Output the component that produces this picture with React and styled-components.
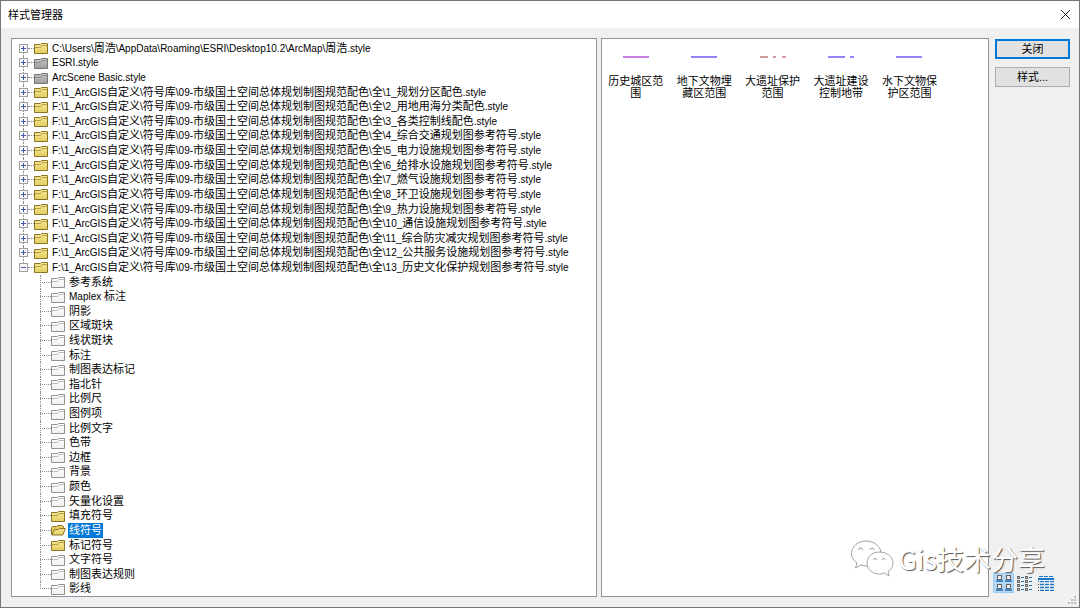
import React from 'react';
import styled, { createGlobalStyle, css } from 'styled-components';

const GlobalStyle = createGlobalStyle`
  *, *::before, *::after { box-sizing: border-box; }
  html, body, #root { height: 100%; margin: 0; }
  body, button {
    font-family: "Liberation Sans", "Noto Sans CJK SC", sans-serif;
    font-size: 11px;
    line-height: 12px;
    color: #000;
  }
`;

const Window = styled.div`
  height: 100%;
  display: flex;
  flex-direction: column;
  background: #f0f0f0;
  border: 1px solid #77777a;
`;

const TitleBar = styled.header`
  flex: none;
  height: 27px;
  padding: 0 8px 0 7px;
  display: flex;
  align-items: center;
  justify-content: space-between;
  background: #fff;
`;

const Title = styled.h1`
  margin: 0;
  font-size: 11px;
  font-weight: 400;
`;

const CloseButton = styled.button`
  display: flex;
  padding: 0;
  border: 0;
  background: none;
`;

const Body = styled.main`
  flex: 1;
  min-height: 0;
  display: grid;
  grid-template-columns: minmax(0, 195fr) minmax(0, 130fr) 75px;
  column-gap: 4px;
  padding: 10px 9px 10px 10px;
`;

const Panel = styled.section`
  background: #fff;
  border: 1px solid #8f959f;
  min-width: 0;
  min-height: 0;
`;

const TreePanel = styled(Panel)`
  padding: 2px 0 0 7px;
`;

const PreviewPanel = styled(Panel)`
  margin-right: 2px;
  padding: 8px 0;
`;

const Tree = styled.ul`
  height: 100%;
  margin: 0;
  padding: 0;
  list-style: none;
  display: flex;
  flex-direction: column;
`;

const Row = styled.li`
  flex: 1;
  min-height: 0;
  display: flex;
  align-items: center;
  padding-left: ${(p) => (p.$child ? 21 : 0)}px;
  position: relative;

  &::before {
    content: '';
    position: absolute;
    left: ${(p) => (p.$child ? 21 : 4)}px;
    top: ${(p) => (p.$first ? '50%' : 0)};
    bottom: ${(p) => (p.$last ? '50%' : 0)};
    border-left: 1px dotted #8c8c8c;
  }
`;

const Expander = styled.button`
  position: relative;
  display: flex;
  width: 9px;
  height: 9px;
  padding: 0;
  border: 0;
  background: none;
`;

const Connector = styled.span`
  width: ${(p) => (p.$long ? 11 : 6)}px;
  border-top: 1px dotted #8c8c8c;
`;

const Label = styled.span`
  margin-left: 2px;
  padding: 0 1px;
  line-height: 15px;
  white-space: pre;
  ${(p) => p.$selected && css`
    background: #0078d7;
    color: #fff;
  `}
`;

const Latin = styled.span`
  font-size: 10px;
`;

const Symbols = styled.ul`
  width: 342px;
  max-width: 100%;
  margin: 0;
  padding: 0;
  list-style: none;
  display: grid;
  grid-template-columns: repeat(5, 1fr);
`;

const Symbol = styled.li`
  display: flex;
  flex-direction: column;
  align-items: center;
  text-align: center;
`;

const SymbolName = styled.span`
  width: 56px;
  margin-top: 8px;
`;

const Side = styled.aside`
  padding-top: 1px;
  display: flex;
  flex-direction: column;
  gap: 8px;
`;

const Button = styled.button`
  height: 20px;
  padding: 0;
  background: #e1e1e1;
  border: ${(p) => (p.$primary ? '2px solid #0078d7' : '1px solid #adadad')};
`;

const Views = styled.div`
  display: flex;
  margin: auto 0 4px -2px;
`;

const ViewButton = styled.button`
  display: flex;
  align-items: center;
  justify-content: center;
  width: 21px;
  height: 20px;
  padding: 0;
  border: ${(p) => (p.$active ? '1px solid #99ccf5' : '0')};
  background: ${(p) => (p.$active ? '#b5d7f3' : 'none')};
`;

const Watermark = styled.div`
  position: absolute;
  right: 35px;
  bottom: 30px;
  display: flex;
  align-items: center;
  gap: 4px;
  pointer-events: none;
  color: #fff;
  font-family: "Noto Sans CJK SC", sans-serif;
  font-size: 27px;
  line-height: 36px;
  text-shadow: 1px 1px 1px #555;
`;

const Grip = styled.svg`
  position: absolute;
  right: 4px;
  bottom: 4px;
`;

const FOLDERS = {
  gold: ['#8a7526', '#f7e995', '#e3cc62'],
  grey: ['#757575', '#c4c5c7', '#9c9da0'],
  empty: ['#929292', '#ffffff', '#f0f0f0'],
};

function Folder({ kind }) {
  const open = kind === 'open';
  const [line, light, dark] = FOLDERS[open ? 'gold' : kind];
  const id = `folder-${kind}`;
  return (
    <svg width="15" height="12" viewBox="0 0 15 12" aria-hidden="true">
      <defs>
        <linearGradient id={id} x1="0" y1="0" x2="0" y2="1">
          <stop offset="0" stopColor={light} />
          <stop offset="1" stopColor={dark} />
        </linearGradient>
      </defs>
      {open ? (
        <g stroke={line} strokeLinejoin="round">
          <path d="M.5 10.500V3.500L1.500 2.500H5.500L7 1.500H11.500L12.500 2.500V5" fill={dark} />
          <path d="M.8 11 3.500 5.500H7.300L8.500 4.500H14.400L11.800 11Z" fill={`url(#${id})`} />
        </g>
      ) : (
        <g stroke={line}>
          <path d="M.5 11.500V2.500H6.500L7.500 1.500H13.500V11.500Z" fill={`url(#${id})`} />
          <path d="M1 5.500H6.500L8 3.500H13" fill="none" opacity=".6" />
        </g>
      )}
    </svg>
  );
}

function ExpandMark({ open }) {
  return (
    <svg width="9" height="9" viewBox="0 0 9 9" aria-hidden="true">
      <rect x=".5" y=".5" width="8" height="8" fill="#f8f8f8" stroke="#a0a0a0" />
      <path d={open ? 'M2 4.5H7' : 'M2 4.5H7M4.5 2V7'} stroke="#3c5aa8" />
    </svg>
  );
}

function MixedText({ children }) {
  return children
    .split(/([\x20-\x7e]+)/)
    .filter(Boolean)
    .map((part, i) => (/^[\x20-\x7e]/.test(part) ? <Latin key={i}>{part}</Latin> : part));
}

const BASE = 'F:\\1_ArcGIS自定义\\符号库\\09-市级国土空间总体规划制图规范配色\\全\\';

const STYLES = [
  ['C:\\Users\\周浩\\AppData\\Roaming\\ESRI\\Desktop10.2\\ArcMap\\周浩.style', 'gold'],
  ['ESRI.style', 'grey'],
  ['ArcScene Basic.style', 'grey'],
  ...[
    '1_规划分区配色',
    '2_用地用海分类配色',
    '3_各类控制线配色',
    '4_综合交通规划图参考符号',
    '5_电力设施规划图参考符号',
    '6_给排水设施规划图参考符号',
    '7_燃气设施规划图参考符号',
    '8_环卫设施规划图参考符号',
    '9_热力设施规划图参考符号',
    '10_通信设施规划图参考符号',
    '11_综合防灾减灾规划图参考符号',
    '12_公共服务设施规划图参考符号',
    '13_历史文化保护规划图参考符号',
  ].map((name) => [`${BASE}${name}.style`, 'gold']),
];

const CATEGORIES = [
  '参考系统', 'Maplex 标注', '阴影', '区域斑块', '线状斑块', '标注', '制图表达标记', '指北针',
  '比例尺', '图例项', '比例文字', '色带', '边框', '背景', '颜色', '矢量化设置',
  '填充符号', '线符号', '标记符号', '文字符号', '制图表达规则', '影线',
];
const CATEGORY_FOLDERS = { 填充符号: 'gold', 线符号: 'open', 标记符号: 'gold' };

const SYMBOLS = [
  ['历史城区范围', '#c77fe0', [[0, 26]]],
  ['地下文物埋藏区范围', '#9a83fa', [[0, 26]]],
  ['大遗址保护范围', '#cf9e9b', [[0, 8], [13, 16], [22, 26]]],
  ['大遗址建设控制地带', '#9a83fa', [[0, 17], [22, 26]]],
  ['水下文物保护区范围', '#9a83fa', [[0, 26]]],
];

function LargeIcons() {
  return (
    <svg width="16" height="16" viewBox="0 0 16 16" aria-hidden="true">
      {[[1, 0], [10, 0], [1, 9], [10, 9]].map(([x, y]) => (
        <g key={`${x}-${y}`}>
          <rect x={x + 0.5} y={y + 0.5} width="4" height="4" fill="#eee" stroke="#666" />
          <path d={`M${x - 1} ${y + 6}H${x + 6}`} stroke="#3f86c8" strokeWidth="2" />
        </g>
      ))}
    </svg>
  );
}

function ListIcon() {
  return (
    <svg width="16" height="16" viewBox="0 0 16 16" aria-hidden="true">
      {[0, 8].map((x) => [1, 5, 9, 13].map((y) => (
        <g key={`${x}-${y}`}>
          <rect x={x + 0.5} y={y + 0.5} width="2" height="2" fill="#ddd" stroke="#666" />
          <path d={`M${x + 4} ${y + 1.5}H${x + 7}`} stroke="#1976c8" />
        </g>
      )))}
    </svg>
  );
}

function DetailsIcon() {
  return (
    <svg width="16" height="16" viewBox="0 0 16 16" aria-hidden="true">
      <path d="M1 1.500H16" stroke="#1976c8" strokeDasharray="4 1" />
      <path d="M0 4H16" stroke="#1976c8" strokeWidth="2" />
      {[6.5, 9.5, 12.5, 15.5].map((y) => (
        <g key={y}>
          <path d={`M0 ${y}H1`} stroke="#444" />
          <path d={`M2 ${y}H16`} stroke="#1976c8" strokeDasharray="4 1" />
        </g>
      ))}
      <path d="M2 8H16M2 11H16M2 14H16" stroke="#8dbbe4" strokeDasharray="4 1" />
    </svg>
  );
}

function ChatLogo() {
  return (
    <svg width="44" height="38" viewBox="0 0 44 38" aria-hidden="true">
      <g fill="#fff" stroke="#8a8a8a" strokeWidth=".8" strokeLinejoin="round">
        <path d="M16 1C8 1 1.500 6.500 1.500 13.500C1.500 17.500 3.500 20.500 7 23L5.500 28L11 25C13 25.700 15 26 17 26C25 26 31 20.500 31 13.500C31 6.500 24 1 16 1Z" />
        <path d="M29.500 12C22 12 17 17 17 23C17 29.500 22.500 34 29.500 34C31.500 34 33 33.700 34.500 33L39 36L38 31.500C41 29.500 43 26.500 43 23C43 17 37 12 29.500 12Z" />
        <path d="M8.500 10a2 2 0 0 1 4 0M20 10a2 2 0 0 1 4 0M23.500 20a1.600 1.600 0 0 1 3.200 0M32 20a1.600 1.600 0 0 1 3.200 0" />
      </g>
    </svg>
  );
}

export default function App() {
  return (
    <>
      <GlobalStyle />
      <Window>
        <TitleBar>
          <Title>样式管理器</Title>
          <CloseButton aria-label="关闭窗口">
            <svg width="11" height="11" viewBox="0 0 11 11" aria-hidden="true">
              <path d="M1 1 10 10M10 1 1 10" stroke="#222" />
            </svg>
          </CloseButton>
        </TitleBar>
        <Body>
          <TreePanel>
            <Tree>
              {STYLES.map(([name, kind], i) => (
                <Row key={name} $first={i === 0} $last={i === STYLES.length - 1}>
                  <Expander aria-label={name} aria-expanded={i === STYLES.length - 1}>
                    <ExpandMark open={i === STYLES.length - 1} />
                  </Expander>
                  <Connector />
                  <Folder kind={kind} />
                  <Label><MixedText>{name}</MixedText></Label>
                </Row>
              ))}
              {CATEGORIES.map((name, i) => (
                <Row key={name} $child $last={i === CATEGORIES.length - 1}>
                  <Connector $long />
                  <Folder kind={CATEGORY_FOLDERS[name] || 'empty'} />
                  <Label $selected={name === '线符号'}><MixedText>{name}</MixedText></Label>
                </Row>
              ))}
            </Tree>
          </TreePanel>
          <PreviewPanel>
            <Symbols>
              {SYMBOLS.map(([name, color, dashes]) => (
                <Symbol key={name}>
                  <svg width="26" height="20" viewBox="0 0 26 20" aria-hidden="true">
                    {dashes.map(([from, to]) => (
                      <path key={from} d={`M${from} 10H${to}`} stroke={color} strokeWidth="2" />
                    ))}
                  </svg>
                  <SymbolName>{name}</SymbolName>
                </Symbol>
              ))}
            </Symbols>
          </PreviewPanel>
          <Side>
            <Button $primary>关闭</Button>
            <Button>样式...</Button>
            <Views>
              <ViewButton $active aria-label="大图标"><LargeIcons /></ViewButton>
              <ViewButton aria-label="列表"><ListIcon /></ViewButton>
              <ViewButton aria-label="详细信息"><DetailsIcon /></ViewButton>
            </Views>
          </Side>
        </Body>
        <Watermark><ChatLogo />Gis技术分享</Watermark>
        <Grip width="8" height="8" viewBox="0 0 8 8" aria-hidden="true">
          <path d="M6 0h2v2h-2zM3 3h2v2h-2zM6 3h2v2h-2zM0 6h2v2h-2zM3 6h2v2h-2zM6 6h2v2h-2z" fill="#bdbdbd" />
        </Grip>
      </Window>
    </>
  );
}
